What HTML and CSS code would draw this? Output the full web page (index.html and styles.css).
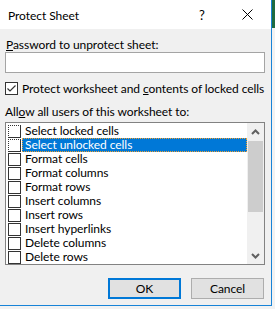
FILE: index.html
```html
<!DOCTYPE html>
<html>
<head>
<meta charset="utf-8">
<link rel="stylesheet" href="styles.css">
</head>
<body>
<div class="dialog">
  <div class="titlebar">
    <span class="title">Protect Sheet</span>
    <span class="help">?</span>
    <span class="close">
      <svg width="11" height="11" viewBox="0 0 11 11"><path d="M0.5 0.5L10.5 10.5M10.5 0.5L0.5 10.5" stroke="#000" stroke-width="1" fill="none"/></svg>
    </span>
  </div>
  <div class="body">
    <div class="label"><u>P</u>assword to unprotect sheet:</div>
    <div class="input"></div>
    <div class="checkrow">
      <span class="cb checked">
        <svg width="11" height="11" viewBox="0 0 11 11"><path d="M1.5 5.5L4 8L9.5 2.5" stroke="#333" stroke-width="1.2" fill="none"/></svg>
      </span>
      <span class="cbtext">Protect worksheet and <u>c</u>ontents of locked cells</span>
    </div>
    <div class="label allow">All<u>o</u>w all users of this worksheet to:</div>
    <div class="listbox">
      <div class="items">
        <div class="item"><span class="cb dotted"></span><span class="txt">Select locked cells</span></div>
        <div class="item sel"><span class="cb dotted"></span><span class="txt">Select unlocked cells</span></div>
        <div class="item"><span class="cb"></span><span class="txt">Format cells</span></div>
        <div class="item"><span class="cb"></span><span class="txt">Format columns</span></div>
        <div class="item"><span class="cb"></span><span class="txt">Format rows</span></div>
        <div class="item"><span class="cb"></span><span class="txt">Insert columns</span></div>
        <div class="item"><span class="cb"></span><span class="txt">Insert rows</span></div>
        <div class="item"><span class="cb"></span><span class="txt">Insert hyperlinks</span></div>
        <div class="item"><span class="cb"></span><span class="txt">Delete columns</span></div>
        <div class="item"><span class="cb"></span><span class="txt">Delete rows</span></div>
      </div>
      <div class="scrollbar">
        <div class="arrow">
          <svg width="9" height="6" viewBox="0 0 9 6"><path d="M1 5L4.5 1.5L8 5" stroke="#606060" stroke-width="2" fill="none"/></svg>
        </div>
        <div class="track"><div class="thumb"></div></div>
        <div class="arrow">
          <svg width="9" height="6" viewBox="0 0 9 6"><path d="M1 1L4.5 4.5L8 1" stroke="#606060" stroke-width="2" fill="none"/></svg>
        </div>
      </div>
    </div>
    <div class="buttons">
      <div class="btn ok">OK</div>
      <div class="btn">Cancel</div>
    </div>
  </div>
</div>
</body>
</html>
```
FILE: styles.css
```css
html, body {
  margin: 0;
  padding: 0;
}
body {
  width: 275px;
  height: 309px;
  overflow: hidden;
  background: linear-gradient(to bottom, #1e6b40 0, #1e6b40 28px, #f2f2f2 28px);
  font-family: Lato, "Liberation Sans", sans-serif;
  font-size: 12px;
  letter-spacing: -0.06px;
  color: #000;
}
.dialog {
  width: 271px;
  height: 305px;
  border-right: 1px solid #1883d7;
  border-bottom: 1px solid #1883d7;
  display: flex;
  flex-direction: column;
  background: #f0f0f0;
}
.titlebar {
  height: 29px;
  background: #fff;
  display: flex;
  align-items: center;
  flex: none;
}
.title {
  margin-left: 8px;
  padding-top: 1px;
}
.help {
  margin-left: auto;
  width: 10px;
  text-align: center;
  font-size: 13px;
  margin-right: 35px;
  padding-top: 1px;
}
.close {
  width: 11px;
  height: 11px;
  margin-right: 18px;
  display: flex;
}
.body {
  flex: 1;
  display: flex;
  flex-direction: column;
  padding: 0 6px 0 5px;
  white-space: nowrap;
}
.label {
  height: 15px;
  line-height: 15px;
  margin-top: 8px;
  padding-left: 1px;
}
.label.allow {
  margin-top: 9px;
  padding-left: 0;
}
.input {
  height: 19px;
  border: 1px solid #a4a4a4;
  background: #fff;
}
.checkrow {
  margin-top: 9px;
  display: flex;
  align-items: center;
  height: 13px;
}
.cb {
  width: 11px;
  height: 11px;
  border: 1px solid #333;
  background: #fff;
  flex: none;
  display: flex;
}
.checkrow .cb {
  margin-right: 4px;
}
.listbox {
  height: 141px;
  margin-top: 3px;
  border: 1px solid #828282;
  background: #fff;
  display: flex;
}
.items {
  flex: 1;
  padding-top: 1px;
  padding-left: 1px;
}
.item {
  height: 14px;
  display: flex;
  align-items: center;
}
.item .cb {
  margin-left: 1px;
  margin-right: 1px;
}
.cb.dotted {
  border-top-style: dotted;
  border-left-style: dotted;
}
.txt {
  flex: 1;
  height: 14px;
  line-height: 14px;
  padding-left: 3px;
  box-sizing: border-box;
}
.item.sel .txt {
  background: #0078d7;
  color: #fff;
  outline: 1px dotted #f0a030;
  outline-offset: -1px;
}
.scrollbar {
  width: 17px;
  background: #f0f0f0;
  display: flex;
  flex-direction: column;
  flex: none;
}
.arrow {
  height: 17px;
  display: flex;
  align-items: center;
  justify-content: center;
  flex: none;
}
.track {
  flex: 1;
  padding: 1px 1px 0 1px;
}
.thumb {
  height: 71px;
  background: #cdcdcd;
}
.buttons {
  display: flex;
  justify-content: flex-end;
  gap: 10px;
  margin-top: 13px;
  padding-right: 1px;
}
.btn {
  width: 73px;
  height: 21px;
  box-sizing: border-box;
  border: 1px solid #adadad;
  background: #e1e1e1;
  display: flex;
  align-items: center;
  justify-content: center;
}
.btn.ok {
  border: 2px solid #0078d7;
}
```
